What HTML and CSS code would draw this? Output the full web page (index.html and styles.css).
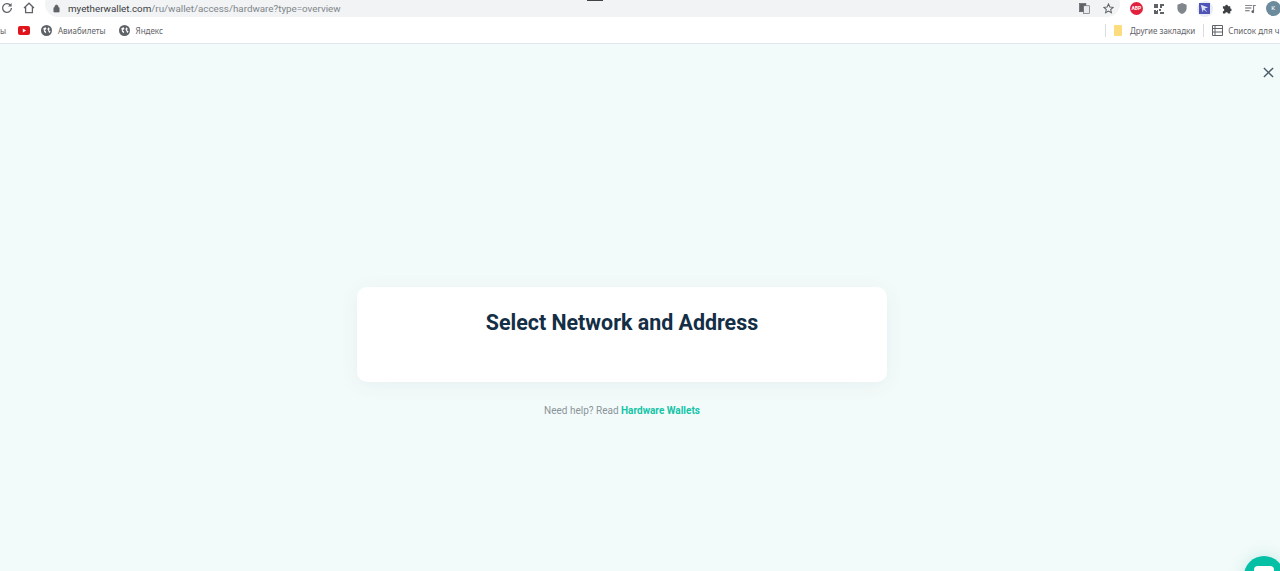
FILE: index.html
```html
<!DOCTYPE html>
<html lang="en">
  <head>
    <meta charset="UTF-8" />
    <title>MyEtherWallet - Select Network and Address</title>
    <link rel="stylesheet" href="styles.css">
  </head>
  <body>
    <header class="browser-chrome">
      <div class="toolbar">
        <svg class="tool-icon reload-icon" viewBox="0 0 12 12"><path d="M9.6 3.4A4.4 4.4 0 1 0 10.4 6" /><path class="solid" d="M10.6 1v3.6H7z" /></svg>
        <svg class="tool-icon home-icon" viewBox="0 0 12 12"><path d="M1 6 6 1.2 11 6M2.6 5v5.6h6.8V5" /></svg>
        <div class="address-bar">
          <svg class="lock-icon" viewBox="0 0 8 10"><path d="M1 4h6v5H1zM2.2 4V2.8a1.8 1.8 0 0 1 3.6 0V4" /></svg>
          <span class="url"><span class="url-host">myetherwallet.com</span>/ru/wallet/access/hardware?type=overview</span>
          <div class="address-actions">
            <svg class="translate-icon" viewBox="0 0 12 12"><rect x="0.5" y="0.5" width="7" height="9" /><rect class="paper" x="5" y="3" width="6.5" height="8.5" /></svg>
            <svg class="star-icon" viewBox="0 0 12 12"><path d="M6 1l1.5 3.3 3.6.4-2.7 2.4.8 3.5L6 8.8l-3.2 1.8.8-3.5L.9 4.7l3.6-.4z" /></svg>
          </div>
        </div>
        <div class="extensions">
          <span class="ext-cell"><span class="abp-badge">ABP</span></span>
          <span class="ext-cell"><svg class="ext-icon qr" viewBox="0 0 10 10"><path d="M0 0h4v4H0zM6 0h4v2H8v2H6zM0 6h2v1h1V6h1v4H0zM5 5h2v2H5zM6 8h4v2H6z" /></svg></span>
          <span class="ext-cell"><svg class="ext-icon shield" viewBox="0 0 10 12"><path d="M5 0l5 2v4c0 3-2.500 5-5 6-2.500-1-5-3-5-6V2z" /></svg></span>
          <span class="ext-cell"><span class="active-ext"><svg viewBox="0 0 12 12"><rect width="12" height="12" fill="#4f55b5" /><path d="M2 2l8 3-4 1 3 4-4-3-1 3z" fill="#dfe2f5" /></svg></span></span>
          <span class="ext-cell"><svg class="ext-icon puzzle" viewBox="0 0 12 12"><path d="M1 3.500h2.500a1.500 1.500 0 1 1 3 0H9V6a1.500 1.500 0 1 1 0 3v2.500H6.500a1.500 1.500 0 1 0-3 0H1V9a1.500 1.500 0 1 0 0-3z" /></svg></span>
          <span class="ext-cell"><svg class="ext-icon queue" viewBox="0 0 12 10"><path d="M0 1h8v1H0zM0 4h7v1H0zM0 7h5v1H0zM9 1h3v1h-2v6.500a1.500 1.500 0 1 1-1-1.400z" /></svg></span>
          <span class="ext-cell"><span class="avatar">к</span></span>
        </div>
      </div>
      <nav class="bookmarks">
        <span class="bookmark-cut">ы</span>
        <svg class="youtube-icon" viewBox="0 0 12 9"><rect width="12" height="9" rx="2" fill="#e1141c" /><path d="M4.800 2.500v4L8 4.500z" fill="#fff" /></svg>
        <span class="bookmark"><svg class="globe-icon" viewBox="0 0 12 12"><circle cx="6" cy="6" r="6" /><path class="land" d="M2.500 3.500l2.500-1 1 1.500-2 2 1.500 1v2L3.500 7.500zM8 2.500l1.500 1.500-1 2 2 .5-1.500 2.500-1-2.500-1-2z" /></svg>Авиабилеты</span>
        <span class="bookmark"><svg class="globe-icon" viewBox="0 0 12 12"><circle cx="6" cy="6" r="6" /><path class="land" d="M2.500 3.500l2.500-1 1 1.500-2 2 1.500 1v2L3.500 7.500zM8 2.500l1.500 1.500-1 2 2 .5-1.500 2.500-1-2.500-1-2z" /></svg>Яндекс</span>
        <span class="bookmarks-right">
          <span class="divider"></span>
          <span class="bookmark other"><span class="folder-icon"></span>Другие закладки</span>
          <span class="divider"></span>
          <span class="bookmark reading"><svg class="list-icon" viewBox="0 0 11 11"><path d="M.5.5h10v10H.5zM3 .5v10M.5 3.500h10M.5 7h10" /></svg>Список для ч</span>
        </span>
      </nav>
    </header>
    <main class="page">
      <section class="card">
        <h1 class="card-title">Select Network and Address</h1>
      </section>
      <p class="help-text">Need help? Read <a class="help-link" href="#">Hardware Wallets</a></p>
    </main>
    <button class="close-button" aria-label="Close"><svg viewBox="0 0 12 12"><path d="M1 1l10 10M11 1 1 11" /></svg></button>
    <div class="chat-button"><span class="chat-bubble"></span></div>
  </body>
</html>
```

FILE: styles.css
```css
html,
body {
  height: 100%;
}
body {
  margin: 0;
  display: flex;
  flex-direction: column;
  overflow: hidden;
  position: relative;
  background: #f3fbfa;
  font-family: Roboto, "Liberation Sans", sans-serif;
}
.browser-chrome {
  height: 43px;
  flex: none;
  background: #fff;
  border-bottom: 1px solid #e3e6e8;
  color: #5f6368;
  font-family: "Noto Sans", "Liberation Sans", sans-serif;
  position: relative;
}
.browser-chrome::before {
  /* bit of the tab strip left at the top edge */
  content: "";
  position: absolute;
  left: 587px;
  top: 0;
  width: 16px;
  height: 1px;
  background: #444;
}
.toolbar {
  height: 17px;
  display: flex;
  align-items: center;
  overflow: hidden;
}
.tool-icon {
  width: 12px;
  height: 12px;
  flex: none;
  fill: none;
  stroke: #5f6368;
  stroke-width: 1.3;
}
.tool-icon .solid {
  fill: #5f6368;
  stroke: none;
}
.reload-icon {
  margin-left: 1px;
  transform: translateY(-1px);
}
.home-icon {
  margin-left: 10px;
  transform: translateY(-1px);
}
.address-bar {
  margin-left: 10px;
  width: 1075px;
  height: 26px;
  flex: none;
  margin-top: -9px;
  padding: 9px 0 0 8px;
  box-sizing: border-box;
  display: flex;
  align-items: center;
  background: #f1f3f4;
  border-radius: 13px;
}
.lock-icon {
  width: 7px;
  height: 9px;
  fill: #5f6368;
  stroke: #5f6368;
  stroke-width: 0.8;
}
.url {
  margin-left: 8px;
  font-family: Roboto, sans-serif;
  font-size: 9.8px;
  color: #80868b;
  white-space: nowrap;
}
.url-host {
  color: #3c4043;
}
.address-actions {
  margin-left: auto;
  padding-right: 6px;
  display: flex;
  align-items: center;
  gap: 13px;
}
.translate-icon {
  width: 11px;
  height: 11px;
  fill: #5f6368;
  stroke: #5f6368;
  stroke-width: 0.7;
}
.translate-icon .paper {
  fill: #e8eaed;
}
.star-icon {
  width: 11px;
  height: 11px;
  fill: none;
  stroke: #5f6368;
  stroke-width: 1.1;
}
.extensions {
  margin-left: 5px;
  display: flex;
  align-items: center;
  flex: none;
}
.ext-cell {
  width: 22.8px;
  height: 17px;
  display: flex;
  align-items: center;
  justify-content: center;
  flex: none;
}
.abp-badge {
  width: 13px;
  height: 13px;
  border-radius: 50%;
  background: #e2213f;
  color: #fff;
  font-family: Roboto, sans-serif;
  font-size: 5px;
  font-weight: 700;
  line-height: 13px;
  text-align: center;
}
.ext-icon {
  width: 10px;
  height: 10px;
  fill: #5f6368;
}
.ext-icon.shield {
  height: 11px;
  fill: #80868b;
}
.active-ext {
  width: 16px;
  height: 16px;
  border-radius: 50%;
  background: #e9ebf6;
  display: flex;
  align-items: center;
  justify-content: center;
}
.active-ext svg {
  width: 11px;
  height: 11px;
}
.ext-icon.puzzle {
  width: 11px;
  height: 11px;
  fill: #3c4043;
}
.ext-icon.queue {
  width: 11px;
  height: 9px;
}
.avatar {
  width: 15px;
  height: 15px;
  flex: none;
  border-radius: 50%;
  background: #6c8c9e;
  color: #fff;
  font-family: Roboto, sans-serif;
  font-size: 7px;
  line-height: 15px;
  text-align: center;
}
.bookmarks {
  height: 26px;
  display: flex;
  align-items: center;
  font-size: 8px;
  color: #5f6368;
  white-space: nowrap;
  overflow: hidden;
}
.bookmark-cut {
  width: 18px;
  flex: none;
}
.youtube-icon {
  width: 12px;
  height: 9px;
  flex: none;
  margin-right: 11px;
}
.bookmark {
  display: flex;
  align-items: center;
  margin-right: 13px;
  flex: none;
}
.globe-icon {
  width: 11px;
  height: 11px;
  margin-right: 6px;
  fill: #5f6368;
}
.globe-icon .land {
  fill: #fff;
}
.bookmarks-right {
  margin-left: auto;
  display: flex;
  align-items: center;
  width: 175px;
  flex: none;
}
.divider {
  width: 1px;
  height: 13px;
  background: #dadce0;
  flex: none;
}
.bookmark.other {
  margin: 0 8px;
}
.folder-icon {
  width: 8px;
  height: 11px;
  margin-right: 8px;
  border-radius: 1px;
  background: #fddc7d;
}
.bookmark.reading {
  margin: 0 0 0 8px;
}
.list-icon {
  width: 11px;
  height: 11px;
  margin-right: 5px;
  fill: none;
  stroke: #5f6368;
  stroke-width: 1;
}
.page {
  flex: 1;
  padding: 243px 36px 0 0;
  display: flex;
  flex-direction: column;
  align-items: center;
}
.card {
  width: 530px;
  height: 95px;
  box-sizing: border-box;
  padding-top: 22px;
  background: #fff;
  border-radius: 10px;
  box-shadow: 0 3px 20px rgba(30, 60, 80, 0.06);
}
.card-title {
  margin: 0;
  color: #132e45;
  font-size: 21.4px;
  font-weight: 700;
  line-height: 28px;
  text-align: center;
}
.help-text {
  margin: 22px 0 0;
  color: #8a9499;
  font-size: 10px;
  line-height: 13px;
}
.help-link {
  color: #14c4a8;
  font-weight: 700;
  text-decoration: none;
}
.close-button {
  position: absolute;
  top: 67px;
  left: 1263px;
  width: 11px;
  height: 11px;
  padding: 0;
  border: 0;
  background: none;
}
.close-button svg {
  display: block;
  fill: none;
  stroke: #4a5c6a;
  stroke-width: 1.500;
}
.chat-button {
  position: absolute;
  left: 1244px;
  top: 556px;
  width: 40px;
  height: 40px;
  border-radius: 50%;
  background: #05c0a5;
  box-shadow: 0 0 18px rgba(5, 160, 140, 0.2);
}
.chat-bubble {
  position: absolute;
  left: 10px;
  top: 10px;
  width: 20px;
  height: 16px;
  border-radius: 4px;
  background: #fff;
}
```
